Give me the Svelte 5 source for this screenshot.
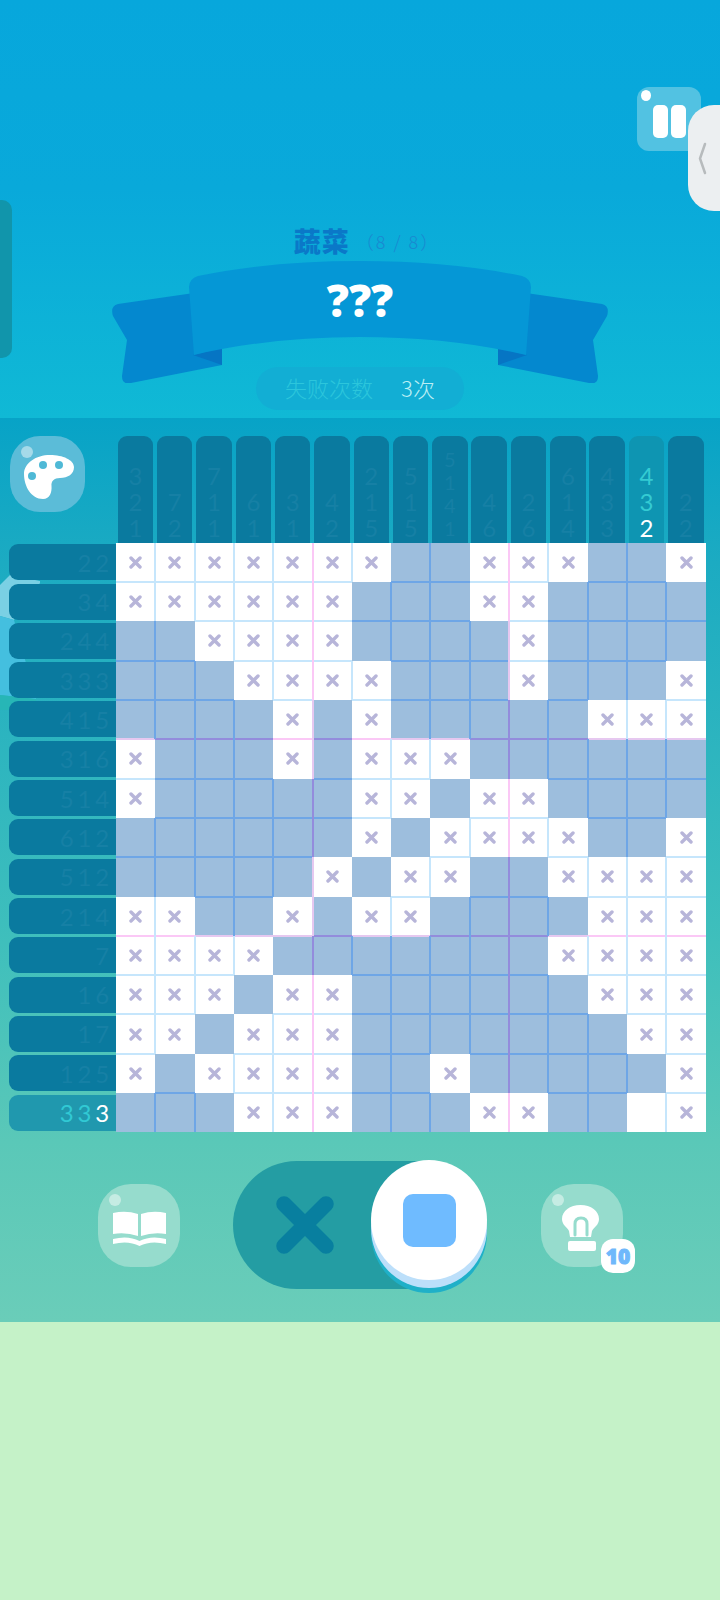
<script>
	// x = crossed, . = filled, o = empty
	const rows = [
		'xxxxxxx..xxx..x',
		'xxxxxx...xx....',
		'..xxxx....x....',
		'...xxxx...x...x',
		'....x.x.....xxx',
		'x...x.xxx......',
		'x.....xx.xx....',
		'......x.xxxx..x',
		'.....x.xx..xxxx',
		'xx..x.xx....xxx',
		'xxxx.......xxxx',
		'xxx.xx......xxx',
		'xx.xxx.......xx',
		'x.xxxx..x.....x',
		'...xxx...xx..ox'
	];
	const rowClues = ['22', '34', '244', '333', '415', '316', '514', '612', '512', '214', '7', '16', '17', '125', '333'];
	const colClues = ['321', '72', '711', '61', '31', '42', '215', '515', '5141', '46', '26', '614', '433', '432', '22'];

	const isBlue = (r, c) => rows[r][c] === '.';

	// colour of the grid line between two neighbouring cells
	function lineColor(a, b, major) {
		if (a && b) return major ? '#938cdc' : '#6ea6e6';
		if (!a && !b) return major ? '#fbc8f6' : '#c6e6fc';
		return major ? '#e6c8f0' : 'transparent';
	}

	function cellVars(r, c) {
		const here = isBlue(r, c);
		const right = c < 14 ? lineColor(here, isBlue(r, c + 1), (c + 1) % 5 === 0) : 'transparent';
		const left = c > 0 ? lineColor(here, isBlue(r, c - 1), c % 5 === 0) : 'transparent';
		const below = r < 14 ? lineColor(here, isBlue(r + 1, c), (r + 1) % 5 === 0) : 'transparent';
		const above = r > 0 ? lineColor(here, isBlue(r - 1, c), r % 5 === 0) : 'transparent';
		return `--r:${right};--l:${left};--b:${below};--t:${above}`;
	}
</script>

<div class="screen">
	<header class="top">
		<div class="side-tab"></div>
		<div class="pause">
			<span class="shine"></span>
			<span class="bar"></span>
			<span class="bar"></span>
		</div>
		<div class="handle">
			<svg width="10" height="33" viewBox="0 0 10 33"><path d="M8 2 L3 16.5 L8 31" fill="none" stroke="#b7bbbd" stroke-width="2.5" stroke-linecap="round" stroke-linejoin="round" /></svg>
		</div>

		<div class="title"><b>蔬菜</b><span>（8 / 8）</span></div>

		<div class="ribbon">
			<svg class="ribbon-art" width="496" height="122" viewBox="112 261 496 122">
				<path d="M118 304 L194 293 V348 L222 348 V365 L131 383 Q122 385 122 376 L127 340 L113 316 Q110 306 118 304 Z" fill="#0488cf" />
				<path d="M602 304 L526 293 V348 L498 348 V365 L589 383 Q598 385 598 376 L593 340 L607 316 Q610 306 602 304 Z" fill="#0488cf" />
				<path d="M193 355 L222 348 V365 Z" fill="#0675c4" />
				<path d="M527 355 L498 348 V365 Z" fill="#0675c4" />
				<path d="M189 287 Q189 279 198 276 Q270 261 360 261 Q450 261 522 276 Q531 279 531 287 L526 355 Q450 337 360 337 Q270 337 194 355 Z" fill="#0597d6" />
			</svg>
			<div class="word">???</div>
		</div>

		<div class="fails"><span class="label">失败次数</span><span class="count">3次</span></div>
	</header>

	<section class="band">
		<svg class="decor" width="60" height="140" viewBox="0 570 60 140">
			<path d="M0 585 L10 575 L40 581 V583 L14 620 L0 616 Z" fill="#7ad0e4" />
			<path d="M0 616 L14 620 L36 699 L0 695 Z" fill="#44bfdf" />
			<path d="M36 699 L0 695 V710 H36 Z" fill="#27b6b6" />
		</svg>

		<div class="board">
			<div class="corner">
				<div class="palette">
					<span class="shine"></span>
					<svg width="75" height="76" viewBox="0 0 75 76">
						<path d="M14 38 C14 27 26 19 40 19 C53 19 64 24 64 31 C64 38 58 42 50 42 C44 42 41 45 41.5 50 C42 56 40 63 33 63 C21 63 14 50 14 38 Z" fill="#fff" />
						<circle cx="33" cy="29" r="4" fill="#4fb9d6" />
						<circle cx="49" cy="29" r="4" fill="#4fb9d6" />
						<circle cx="22" cy="40" r="4" fill="#4fb9d6" />
					</svg>
				</div>
			</div>

			<div class="col-clues">
				{#each colClues as clue, i}
					<div class="col-clue" class:active={i === 13} class:long={clue.length > 3}>
						{#each clue.split('') as d, k}
							<span class:done={i === 13 && k === 2}>{d}</span>
						{/each}
					</div>
				{/each}
			</div>

			<div class="row-clues">
				{#each rowClues as clue, i}
					<div class="row-clue" class:active={i === 14}>
						{#each clue.split('') as d, k}
							<span class:done={i === 14 && k === 2}>{d}</span>
						{/each}
					</div>
				{/each}
			</div>

			<div class="grid">
				{#each rows as row, r}
					{#each row.split('') as cell, c}
						<div class="cell" class:blue={cell === '.'} style={cellVars(r, c)}>
							{#if cell === 'x'}
								<svg width="13" height="13" viewBox="0 0 13 13"><path d="M2 2 L11 11 M11 2 L2 11" stroke="#b7b5d9" stroke-width="3.4" stroke-linecap="round" /></svg>
							{/if}
						</div>
					{/each}
				{/each}
			</div>
		</div>

		<div class="controls">
			<div class="round-btn book">
				<span class="shine"></span>
				<svg width="82" height="83" viewBox="0 0 82 83">
					<path d="M15 29 Q28 26 40 30 V52 Q28 48 15 50 Z" fill="#fff" />
					<path d="M68 29 Q55 26 43 30 V52 Q55 48 68 50 Z" fill="#fff" />
					<path d="M15 55 Q30 51 41.5 57 Q53 51 68 55 V60 Q53 56 41.5 62 Q30 56 15 60 Z" fill="#fff" />
				</svg>
			</div>

			<div class="toggle">
				<svg width="58" height="58" viewBox="0 0 58 58"><path d="M8 8 L50 50 M50 8 L8 50" stroke="#087f9f" stroke-width="15.5" stroke-linecap="round" /></svg>
				<div class="knob"><span class="square"></span></div>
			</div>

			<div class="round-btn bulb">
				<span class="shine"></span>
				<svg width="82" height="83" viewBox="0 0 82 83">
					<path d="M39.5 21 C29 21 21 27 21 35 C21 41 26 43 28 47 L29 53 H50 L51 47 C53 43 58 41 58 35 C58 27 50 21 39.5 21 Z" fill="#fff" />
					<path d="M34 51 V40 Q34 34 40 34 Q46 34 46 40 V51" fill="none" stroke="#96dccd" stroke-width="3" stroke-linecap="round" />
					<rect x="27" y="57" width="28" height="10" rx="2" fill="#fff" />
				</svg>
				<span class="badge">10</span>
			</div>
		</div>
	</section>

	<div class="rest"></div>
</div>

<style>
	:global(body) {
		margin: 0;
	}

	.screen {
		width: 720px;
		height: 1600px;
		display: flex;
		flex-direction: column;
		overflow: hidden;
		background: #c5f2c8;
	}

	.top {
		position: relative;
		height: 418px;
		box-sizing: border-box;
		padding-top: 226px;
		display: flex;
		flex-direction: column;
		align-items: center;
		background: linear-gradient(#07a7dc, #09a9da 45%, #10b9d5);
	}

	.side-tab {
		position: absolute;
		left: 0;
		top: 200px;
		width: 12px;
		height: 158px;
		background: #1195ab;
		border-radius: 0 10px 10px 0;
	}

	.pause {
		position: absolute;
		left: 637px;
		top: 87px;
		width: 64px;
		height: 64px;
		background: #52c2e2;
		border-radius: 12px;
		display: flex;
		gap: 3px;
		padding: 18px 0 0 16px;
		box-sizing: border-box;
	}

	.pause .bar {
		width: 15px;
		height: 33px;
		background: #fff;
		border-radius: 5px;
	}

	.pause .shine {
		left: 4px;
		top: 3px;
		width: 10px;
		height: 11px;
		background: #fff;
	}

	.handle {
		position: absolute;
		left: 688px;
		top: 105px;
		width: 32px;
		height: 106px;
		background: #eceff1;
		border-radius: 26px 0 0 26px;
		display: flex;
		align-items: center;
		padding-left: 9px;
		box-sizing: border-box;
	}

	.title {
		height: 28px;
		margin: 0 0 4px 14px;
		display: flex;
		align-items: center;
		font-family: 'Noto Sans CJK SC', sans-serif;
		color: #0a78c8;
	}

	.title b {
		font-size: 27px;
		font-weight: 900;
		letter-spacing: 1px;
	}

	.title span {
		font-size: 18px;
		font-weight: 300;
		letter-spacing: 2px;
		margin: 2px 0 0 6px;
		color: #1a88d0;
	}

	.ribbon {
		position: relative;
		width: 496px;
		height: 122px;
		margin-top: 3px;
	}

	.ribbon-art {
		position: absolute;
		left: 0;
		top: 0;
	}

	.word {
		position: relative;
		height: 78px;
		display: flex;
		align-items: center;
		justify-content: center;
		font-family: 'Open Sans', sans-serif;
		font-weight: 800;
		font-size: 44px;
		color: #fff;
	}

	.fails {
		width: 208px;
		height: 43px;
		margin-top: -16px;
		padding-bottom: 3px;
		box-sizing: border-box;
		position: relative;
		background: #12aed4;
		border-radius: 22px;
		display: flex;
		align-items: center;
		justify-content: center;
		gap: 28px;
		font-family: 'Noto Sans CJK SC', sans-serif;
		font-size: 22px;
		font-weight: 300;
	}

	.fails .label {
		color: #2cc6dc;
	}

	.fails .count {
		color: #bdeef5;
	}

	.band {
		position: relative;
		height: 904px;
		background: linear-gradient(#07a3c7, #1cabc2 16%, #3fbfbc 58%, #5ac8b8 80%, #6acdb9);
	}

	.decor {
		position: absolute;
		left: 0;
		top: 152px;
	}

	.board {
		position: relative;
		display: grid;
		grid-template-columns: 106.7px 589.7px;
		grid-template-rows: 106.7px 589.7px;
		padding: 18px 0 0 9.3px;
	}

	.corner {
		padding-left: 0.7px;
	}

	.palette {
		position: relative;
		width: 75px;
		height: 76px;
		background: #5bbcd8;
		border-radius: 40%;
	}

	.palette svg,
	.round-btn svg {
		display: block;
	}

	.shine {
		position: absolute;
		left: 11px;
		top: 10px;
		width: 12px;
		height: 12px;
		border-radius: 50%;
		background: rgba(255, 255, 255, 0.45);
	}

	.col-clues {
		display: grid;
		grid-template-columns: repeat(15, 1fr);
	}

	.col-clue {
		margin-left: 1.7px;
		width: 35.5px;
		background: #0a7a9f;
		border-radius: 9px 9px 0 0;
		display: flex;
		flex-direction: column;
		justify-content: flex-end;
		align-items: center;
		padding-bottom: 2px;
		box-sizing: border-box;
		font-family: Lato, sans-serif;
		font-size: 24px;
		line-height: 26px;
		color: #1680a5;
	}

	.col-clue.long {
		font-size: 20px;
		line-height: 23.3px;
	}

	.col-clue.active {
		background: #0e95b2;
		color: #34cbd3;
	}

	.row-clues {
		display: grid;
		grid-template-rows: repeat(15, 1fr);
	}

	.row-clue {
		margin-top: 1.5px;
		height: 36px;
		background: #0a7a9f;
		border-radius: 9px 0 0 9px;
		display: flex;
		justify-content: flex-end;
		align-items: center;
		padding-right: 5px;
		font-family: Lato, sans-serif;
		font-size: 24px;
		color: #1680a5;
	}

	.row-clue span {
		width: 17.7px;
		text-align: center;
	}

	.row-clue.active {
		background: #2098ae;
		color: #31c9d4;
	}

	.col-clue .done,
	.row-clue .done {
		color: #fff;
	}

	.grid {
		display: grid;
		grid-template-columns: repeat(15, 1fr);
		grid-template-rows: repeat(15, 1fr);
		background: #fff;
	}

	.cell {
		background: #fff;
		display: flex;
		align-items: center;
		justify-content: center;
		box-shadow:
			inset -1px 0 0.5px var(--r),
			inset 1px 0 0.5px var(--l),
			inset 0 -1px 0.5px var(--b),
			inset 0 1px 0.5px var(--t);
	}

	.cell.blue {
		background: #9dbedd;
	}

	.controls {
		height: 190px;
		box-sizing: border-box;
		padding: 0 0 4px 98px;
		display: flex;
		align-items: center;
	}

	.round-btn {
		position: relative;
		width: 82px;
		height: 83px;
		background: #96dccd;
		border-radius: 40%;
	}

	.toggle {
		position: relative;
		width: 247px;
		height: 128px;
		margin: 0 61px 0 53px;
		background: #249da3;
		border-radius: 64px;
		display: flex;
		align-items: center;
		padding-left: 43px;
		box-sizing: border-box;
	}

	.knob {
		position: absolute;
		left: 138px;
		top: -1px;
		width: 116px;
		height: 120px;
		background: #fff;
		border-radius: 50%;
		box-shadow:
			0 8px 0 #bcdffa,
			0 13px 0 #1fb0c8;
		display: flex;
		align-items: center;
		justify-content: center;
	}

	.square {
		width: 53px;
		height: 53px;
		background: #6fbbff;
		border-radius: 10px;
	}

	.badge {
		position: absolute;
		left: 60px;
		top: 55px;
		width: 34px;
		height: 34px;
		background: #fff;
		border-radius: 12px;
		display: flex;
		align-items: center;
		justify-content: center;
		font-family: 'Open Sans', sans-serif;
		font-weight: 800;
		font-size: 21px;
		-webkit-text-stroke: 1px #6fb8fb;
		color: #6fb8fb;
	}

	.rest {
		flex: 1;
		background: #c5f2c8;
	}
</style>
